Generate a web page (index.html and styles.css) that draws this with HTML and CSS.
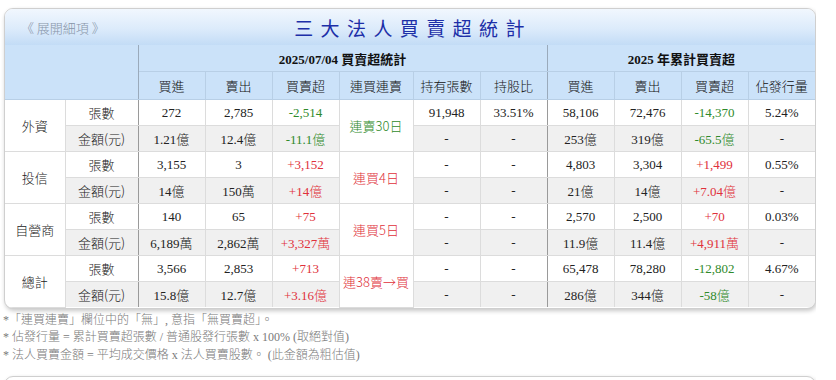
FILE: index.html
```html
<!DOCTYPE html>
<html lang="zh-Hant">
<head>
<meta charset="utf-8">
<link rel="stylesheet" href="styles.css">
</head>
<body>
<div class="card">
  <div class="titlebar">
    <a class="expand">《 展開細項 》</a>
    <h1 class="title">三大法人買賣超統計</h1>
    <span></span>
  </div>
  <table class="stats">
    <colgroup>
      <col class="w-grp"><col class="w-lbl">
      <col class="w-n"><col class="w-n"><col class="w-n"><col class="w-streak">
      <col class="w-n"><col class="w-n">
      <col class="w-n"><col class="w-n"><col class="w-n"><col class="w-n">
    </colgroup>
    <thead>
      <tr class="h1">
        <th colspan="2" rowspan="2" class="sep"></th>
        <th colspan="6" class="sep serif">2025/07/04 買賣超統計</th>
        <th colspan="4" class="serif">2025 年累計買賣超</th>
      </tr>
      <tr class="h2">
        <th>買進</th><th>賣出</th><th>買賣超</th><th>連買連賣</th><th>持有張數</th><th class="sep">持股比</th>
        <th>買進</th><th>賣出</th><th>買賣超</th><th>佔發行量</th>
      </tr>
    </thead>
    <tbody>
      <tr>
        <td rowspan="2" class="grp">外資</td><td class="lbl sep">張數</td>
        <td>272</td><td>2,785</td><td class="dn">-2,514</td><td rowspan="2" class="streak dn">連賣30日</td><td>91,948</td><td class="sep">33.51%</td>
        <td>58,106</td><td>72,476</td><td class="dn">-14,370</td><td>5.24%</td>
      </tr>
      <tr class="alt">
        <td class="lbl sep">金額(元)</td>
        <td>1.21億</td><td>12.4億</td><td class="dn">-11.1億</td><td>-</td><td class="sep">-</td>
        <td>253億</td><td>319億</td><td class="dn">-65.5億</td><td>-</td>
      </tr>
      <tr>
        <td rowspan="2" class="grp">投信</td><td class="lbl sep">張數</td>
        <td>3,155</td><td>3</td><td class="up">+3,152</td><td rowspan="2" class="streak up">連買4日</td><td>-</td><td class="sep">-</td>
        <td>4,803</td><td>3,304</td><td class="up">+1,499</td><td>0.55%</td>
      </tr>
      <tr class="alt">
        <td class="lbl sep">金額(元)</td>
        <td>14億</td><td>150萬</td><td class="up">+14億</td><td>-</td><td class="sep">-</td>
        <td>21億</td><td>14億</td><td class="up">+7.04億</td><td>-</td>
      </tr>
      <tr>
        <td rowspan="2" class="grp">自營商</td><td class="lbl sep">張數</td>
        <td>140</td><td>65</td><td class="up">+75</td><td rowspan="2" class="streak up">連買5日</td><td>-</td><td class="sep">-</td>
        <td>2,570</td><td>2,500</td><td class="up">+70</td><td>0.03%</td>
      </tr>
      <tr class="alt">
        <td class="lbl sep">金額(元)</td>
        <td>6,189萬</td><td>2,862萬</td><td class="up">+3,327萬</td><td>-</td><td class="sep">-</td>
        <td>11.9億</td><td>11.4億</td><td class="up">+4,911萬</td><td>-</td>
      </tr>
      <tr>
        <td rowspan="2" class="grp">總計</td><td class="lbl sep">張數</td>
        <td>3,566</td><td>2,853</td><td class="up">+713</td><td rowspan="2" class="streak up">連38賣→買</td><td>-</td><td class="sep">-</td>
        <td>65,478</td><td>78,280</td><td class="dn">-12,802</td><td>4.67%</td>
      </tr>
      <tr class="alt last">
        <td class="lbl sep">金額(元)</td>
        <td>15.8億</td><td>12.7億</td><td class="up">+3.16億</td><td>-</td><td class="sep">-</td>
        <td>286億</td><td>344億</td><td class="dn">-58億</td><td>-</td>
      </tr>
    </tbody>
  </table>
</div>
<ul class="notes">
  <li>*「連買連賣」欄位中的「無」, 意指「無買賣超」。</li>
  <li>* 佔發行量 = 累計買賣超張數 / 普通股發行張數 x 100% (取絕對值)</li>
  <li>* 法人買賣金額 = 平均成交價格 x 法人買賣股數。 (此金額為粗估值)</li>
</ul>
<div class="card next"></div>
</body>
</html>
```
FILE: styles.css
```css
html, body {
  margin: 0;
  padding: 0;
  background: #fff;
}
body {
  padding: 8px 0 0 4px;
  width: 812px;
  font-family: "Liberation Serif", "Noto Sans CJK TC", serif;
  font-weight: 300;
  color: #222;
}
.card {
  border: 1px solid #cfcfcf;
  border-radius: 9px;
  box-shadow: 1px 2px 4px rgba(0, 0, 0, 0.22);
  overflow: hidden;
  background: #fff;
}
.titlebar {
  height: 36px;
  display: grid;
  grid-template-columns: 1fr auto 1fr;
  align-items: center;
  background: linear-gradient(to bottom, #f1f7fe 0%, #dcebfb 55%, #c3dcf6 100%);
}
.expand {
  padding-left: 16px;
  font-family: "Noto Sans CJK TC", sans-serif;
  font-size: 13px;
  color: #8794a8;
}
.title {
  margin: 0;
  font-family: "Noto Sans CJK TC", sans-serif;
  font-weight: normal;
  font-size: 19px;
  letter-spacing: 7.4px;
  color: #1d2fa8;
  padding-left: 6px;
}
.stats {
  width: 810px;
  table-layout: fixed;
  border-collapse: collapse;
  font-size: 13px;
}
.w-grp { width: 60px; }
.w-lbl { width: 73px; }
.w-n { width: 67px; }
.w-streak { width: 74px; }
.stats th, .stats td {
  border: 1px solid #dcdcdc;
  text-align: center;
  padding: 0;
}
.stats tr > :first-child { border-left: none; }
.stats tr > :last-child { border-right: none; }
.stats thead th {
  background: #cbe2f9;
  border-color: #b8cfe6;
  font-weight: 300;
  font-family: "Noto Sans CJK TC", sans-serif;
  color: #111;
}
.stats thead th.serif {
  font-family: "Liberation Serif", "Noto Sans CJK TC", serif;
  font-weight: bold;
}
.stats thead tr:first-child th { border-top: none; }
.h1 th { height: 26px; }
.h2 th { height: 27px; }
.stats tbody td { height: 25px; }
.stats th.sep, .stats td.sep { border-right: 1px solid #9a9a9a; }
.stats thead th.sep { border-right-color: #9aaabb; }
.alt td { background: #f0f0f0; }
.alt td.grp { background: #fff; }
.grp, .lbl, .streak {
  font-family: "Noto Sans CJK TC", sans-serif;
}
.stats td.streak { background: #fff; }
.last td { border-bottom: none; }
.up { color: #e0313b; }
.dn { color: #2f8a2b; }
.notes {
  list-style: none;
  margin: 3px 0 0 -1px;
  padding: 0;
  font-family: "Liberation Serif", "Noto Sans CJK TC", serif;
  font-size: 12px;
  line-height: 17.5px;
  color: #7a7a7a;
}
.next {
  margin-top: 12px;
  height: 20px;
}
```
